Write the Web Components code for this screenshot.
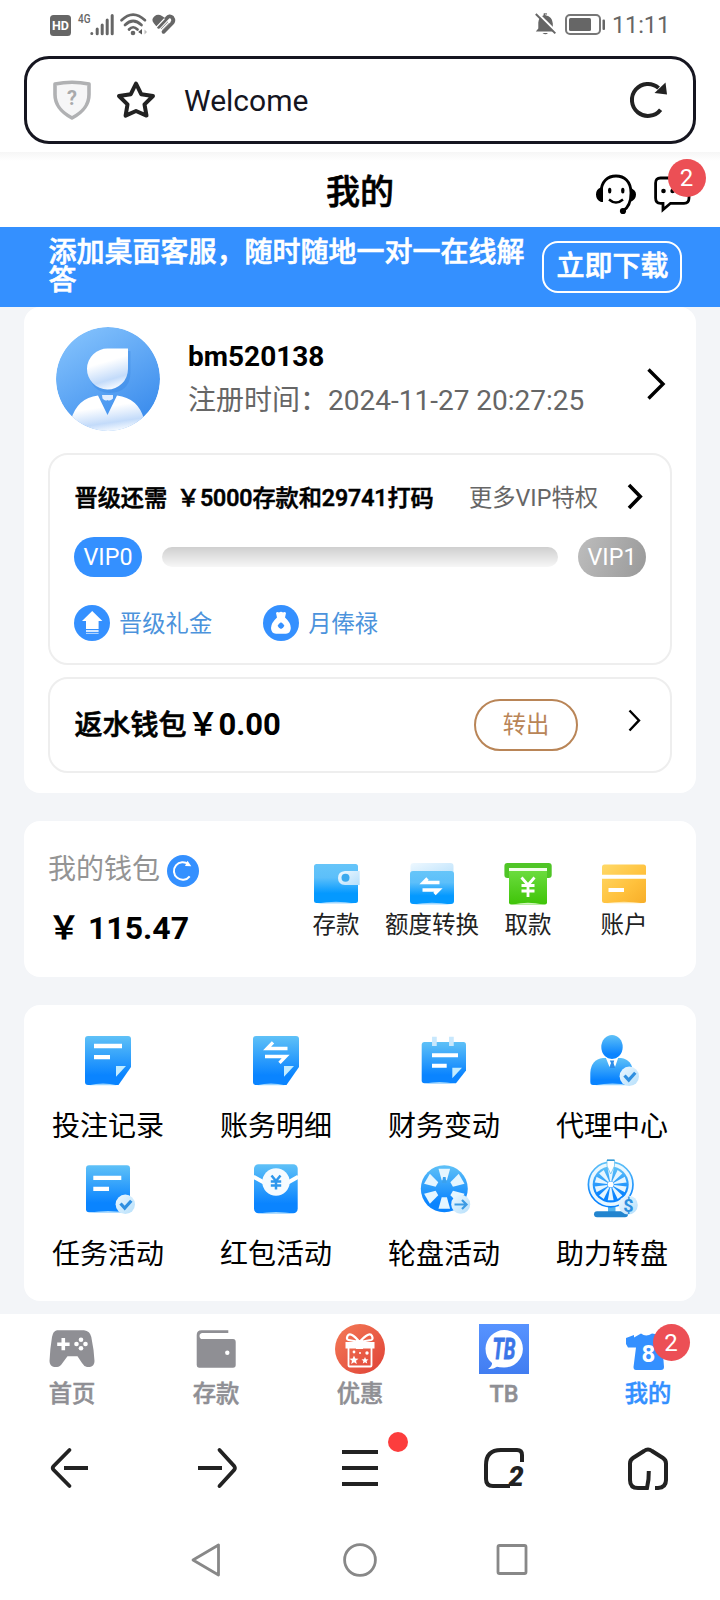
<!DOCTYPE html>
<html lang="zh-CN">
<head>
<meta charset="utf-8">
<title>我的</title>
<style>
html,body{margin:0;padding:0}
body{width:720px;height:1600px;overflow:hidden;background:#fff;color:#000;font-family:Roboto,"Noto Sans CJK SC",sans-serif;font-size:28px;line-height:1.2}
</style>
</head>
<body>
<mobile-screen></mobile-screen>
<script>
const GRAD = `<defs>
<linearGradient id="b" x1="0" y1="0" x2="0" y2="1"><stop offset="0" stop-color="#5fc1f7"/><stop offset=".8" stop-color="#0a84ff"/><stop offset="1" stop-color="#0a84ff"/></linearGradient>
<linearGradient id="w" x1="0" y1="0" x2="0" y2="1"><stop offset="0" stop-color="#66c5f9"/><stop offset=".35" stop-color="#5cbffa"/><stop offset=".75" stop-color="#0499ff"/><stop offset="1" stop-color="#0499ff"/></linearGradient>
<linearGradient id="l" x1="0" y1="0" x2="1" y2="1"><stop offset="0" stop-color="#eef8ff"/><stop offset="1" stop-color="#b5dffb"/></linearGradient>
</defs>`;
const wedges = (n, cx, cy, r1, r2, h1, h2, fill) => Array.from({length: n}, (_, i) =>
  `<path fill="${fill}" transform="rotate(${i * 360 / n} ${cx} ${cy})" d="M${cx - h1} ${cy - r1}L${cx - h2} ${cy - r2}H${cx + h2}L${cx + h1} ${cy - r1}z"/>`).join('');
const SHEEN = (x1, x2, y) => `<path d="M${x1} ${y}q${(x2 - x1) / 2} -3.4 ${x2 - x1} 0z" fill="#9bd5ff"/>`;
const CHECK = `<circle cx="49.3" cy="48.3" r="9.7" fill="url(#l)"/><path d="M44.5 47.5l4.2 4.6 6.6-7.4" fill="none" stroke="#2f8fe0" stroke-width="3.2"/>`;

const ICONS = {
hd:[21,21,`<rect width="21" height="21" rx="3.5" fill="#666"/><text x="10.5" y="15.4" text-anchor="middle" font-size="13" font-weight="700" fill="#fff" textLength="17" lengthAdjust="spacingAndGlyphs">HD</text>`],
signal:[36,23,`<text x="0" y="9.8" font-size="12.5" font-weight="500" fill="#666" textLength="12.5" lengthAdjust="spacingAndGlyphs">4G</text><g stroke="#666" stroke-width="3" stroke-linecap="round"><path d="M13.8 20.5v0M19.2 16v4.8M24.2 12v8.8M29.2 7v13.8M34.2 2.5v18.3"/></g>`],
wifi:[27,23,`<g fill="none" stroke="#666" stroke-width="2.7" stroke-linecap="round"><path d="M1.5 7.2Q13 -4 25 7.2M5 12Q13 4 21.5 12M9 16.5Q13 12 17.5 16.5"/></g><circle cx="13" cy="20" r="2.3" fill="#666"/><path d="M22 16v5.5l-3.800-2.500z" fill="#555"/><path d="M24.500 16.500l2.500 2.500-2.500 2.500z" fill="#bbb"/>`],
heart:[23,20,`<path d="M4.500 12.500L2 9.500Q-1.500 5.500 2.500 2.200Q6-.5 10 2L13 4z" fill="#666"/><path d="M6.800 12.800L14.800 4.300Q17.500 1 20.300 3.500Q22.500 6.500 19.800 9.500L11.500 17.800" fill="none" stroke="#666" stroke-width="3.800" stroke-linecap="round" stroke-linejoin="round"/><path d="M9.500 15.500L16.500 8.200" stroke="#666" stroke-width="2"/><path d="M8.300 17L17 8M4 13.600L12.500 4.600" stroke="#fff" stroke-width="1.300"/>`],
bell:[21,22,`<path d="M10.5 0v2.2Q17.5 3.5 17.8 10.5V15.5L20 18.5H.8L3.3 15.5V9.5Q3.7 4 8.6 2.2V.6Q10.4-.6 12 .6V2.3" fill="#666"/><path d="M7.5 20h5.5q-2.5 2.6-5.5 0z" fill="#666"/><path d="M2.4 0L21 18.6" stroke="#fff" stroke-width="2.4"/><path d="M.8 1L20.3 20.4" stroke="#666" stroke-width="2"/>`],
battery:[41,21,`<rect x="1" y="1" width="34" height="19" rx="4" fill="none" stroke="#777" stroke-width="2"/><rect x="4" y="4" width="22" height="13" rx="1.5" fill="#666"/><rect x="37.5" y="5.5" width="2.5" height="10.5" rx="1" fill="#666"/>`],
shield:[38,40,`<path d="M2 4Q19 .5 36 4V14.500C36 26 29 32.5 19 38C9 32.5 2 26 2 14.500z" fill="#f6f6f7" stroke="#b0b1b3" stroke-width="3.6" stroke-linejoin="round"/><text x="19" y="25" text-anchor="middle" font-size="20" font-weight="700" fill="#a9aaac">?</text>`],
star:[40,40,`<path d="M20 3.5L25.2 14.2L37 16L28.5 24.4L30.5 35.6L20 31L9.6 35.6L11.5 24.4L3 16L14.8 14.2z" fill="none" stroke="#222" stroke-width="4" stroke-linejoin="round"/>`],
reload:[38,38,`<path d="M30.6 28.7A16 16 0 1 1 28.6 7" fill="none" stroke="#222" stroke-width="4"/><path d="M35.5 1.5L37 13.5L24.5 12z" fill="#222"/>`],
headset:[40,40,`<path d="M5 19C5 7 12 2 20 2S35 7 35 19Q35 32 27 37" fill="none" stroke="#000" stroke-width="2.8"/><path d="M7 13.5V28H5Q0 26 0 20.5Q0 15 5 13.5zM34 14Q40 15.5 40 20.5Q40 26 34 28z" fill="#000"/><circle cx="27" cy="37" r="3.1"/><ellipse cx="13.7" cy="16.7" rx="1.7" ry="2.9"/><ellipse cx="26.8" cy="16.7" rx="1.7" ry="2.9"/><path d="M13 25.5Q20 31.5 27 25.5" fill="none" stroke="#000" stroke-width="2.4"/>`],
message:[37,37,`<path d="M6.5 2H30Q35 2 35 7V22Q35 27.3 30 27.3H16.5L9 33.8V27.3H6.5Q1.6 27.3 1.6 22V7Q1.6 2 6.5 2z" fill="none" stroke="#000" stroke-width="2.8"/><circle cx="9.5" cy="15" r="2.3"/><circle cx="18.6" cy="15" r="2.3"/><circle cx="27.6" cy="15" r="2.3"/>`],
avatar:[104,104,`<defs><linearGradient id="a" x1=".15" y1="0" x2=".75" y2="1"><stop offset="0" stop-color="#85c3fd"/><stop offset="1" stop-color="#388aec"/></linearGradient><linearGradient id="p" x1=".25" y1="0" x2=".55" y2="1"><stop offset=".35" stop-color="#fff"/><stop offset=".78" stop-color="#c3dbfa"/><stop offset="1" stop-color="#f4f9ff"/></linearGradient><clipPath id="c"><circle cx="52" cy="52" r="52"/></clipPath></defs><g clip-path="url(#c)"><circle cx="52" cy="52" r="52" fill="url(#a)"/><path d="M53 22H73V44Q72 63.5 52 64Q33 63 31.5 43.5Q33 23 53 22z" fill="#2f7fdd" opacity=".3" transform="translate(1.5 2)"/><path d="M52 21.500H72V42A20.500 20.500 0 1 1 52 21.500z" fill="url(#p)"/><path d="M15 93Q21 71 42 68.500L51.500 88L61 68.500Q82 71 88 92L80 104H25z" fill="url(#p)"/><path d="M46 68H57V71.500Q54 74.500 51.500 73Q49 74.500 46.500 71.500z" fill="#e0edff"/></g>`],
chev:[20,34,`<path d="M2.5 2.5L17 17L2.5 31.5" fill="none" stroke="#000" stroke-width="3.4"/>`],
chevb:[17,27,`<path d="M2 2L13.2 13.4L2 25" fill="none" stroke="#000" stroke-width="3.6"/>`],
chevs:[14,23,`<path d="M1.5 1.5L11 11.4L1.5 21.5" fill="none" stroke="#000" stroke-width="2.4"/>`],
promote:[36,36,`<circle cx="18" cy="18" r="18" fill="#3490ff"/><path d="M18.2 6L28.4 16H24.6V24H12V16H8z" fill="#fff"/><path d="M12 26H24.6" stroke="#fff" stroke-width="1.6"/><path d="M12 28.4H24.6" stroke="#bcdcff" stroke-width="1"/>`],
bag:[36,36,`<circle cx="18" cy="18" r="18" fill="#3490ff"/><path d="M13 8Q14 6.5 16 7.5Q18 6 20 7.5Q22 6.5 23 8L22 12.500H14zM14 12.500H22Q28 18 27.8 23Q27.5 28.7 23 28.7H13Q8.2 28.7 8 23Q8 18 14 12.500z" fill="#fff"/><path d="M18 17.300l2 1.400 1.400 2-1.400 2-2 1.400-2-1.400-1.400-2 1.400-2z" fill="#3490ff"/>`],
refresh:[32,32,`<circle cx="16" cy="16" r="16" fill="#3490ff"/><path d="M22.7 21.3A8.8 8.8 0 1 1 21.5 9.3" fill="none" stroke="#fff" stroke-width="2"/><path d="M20.5 5.7L24.3 11.3L18 11z" fill="#fff"/>`],
deposit:[48,48,`${GRAD}<rect x="2" y="5" width="44" height="39" rx="2.5" fill="url(#w)"/>${SHEEN(5,43,44.4)}<path d="M33 12H47.7V26H33Q26 25.5 26 19Q26 12.500 33 12z" fill="url(#l)"/><circle cx="33.5" cy="18.8" r="4" fill="#3ba9ee"/>`],
transfer:[48,48,`${GRAD}<rect x="2.500" y="4" width="43" height="16" rx="3" fill="url(#l)"/><rect x="2" y="12" width="44" height="33" rx="3" fill="url(#w)"/>${SHEEN(5,43,45.4)}<path d="M31.500 23.500H15.500L19.500 19.500M14.500 31H30.500L26.500 35" fill="none" stroke="#fff" stroke-width="3.400"/>`],
withdraw:[48,48,`<defs><linearGradient id="g" x1="0" y1="0" x2="0" y2="1"><stop offset="0" stop-color="#6bdc3e"/><stop offset="1" stop-color="#3fc408"/></linearGradient></defs><rect x=".4" y="4" width="47.300" height="15" rx="3" fill="#4fc526"/><rect x="5" y="9" width="38" height="3" fill="#f0ffe9"/><path d="M5 12H43V43.500Q43 45.500 41 45.500H7Q5 45.500 5 43.500z" fill="url(#g)"/><path d="M9 45.500Q24 42 39 45.500z" fill="#d0f5bd"/><path d="M17.500 18.500L24 26L30.500 18.500M24 25V38M17.500 26.500H30.500M17.500 32H30.500" fill="none" stroke="#fff" stroke-width="2.8"/>`],
account:[48,48,`<defs><linearGradient id="y" x1="0" y1="0" x2="1" y2="1"><stop offset="0" stop-color="#ffd968"/><stop offset=".6" stop-color="#ffc13c"/><stop offset="1" stop-color="#f7ae29"/></linearGradient></defs><rect x="2" y="5.500" width="44" height="38.500" rx="2.500" fill="url(#y)"/><path d="M2 17.800H46M8.500 31H24" stroke="#fff" stroke-width="4"/><path d="M5 44.300Q24 41.300 43 44.300z" fill="#ffe7ac"/>`],
bets:[64,64,`${GRAD}<path d="M12 8H52Q55 8 55 11V39L42.500 57H12Q9 57 9 54V11Q9 8 12 8z" fill="url(#b)"/>${SHEEN(13,41,57.300)}<path d="M18 18H46M18 29.200H34" stroke="#fff" stroke-width="4.300"/><path d="M40 38H50L40 48.700z" fill="#c3ecff"/>`],
ledger:[64,64,`${GRAD}<path d="M12 8H52Q55 8 55 11V39L42.500 57H12Q9 57 9 54V11Q9 8 12 8z" fill="url(#b)"/>${SHEEN(13,41,57.300)}<path d="M43.500 20.500H23L29 14.300M21 28.500H41.700L35.500 34.800" fill="none" stroke="#fff" stroke-width="3.300"/><path d="M40 38H50L40 48.700z" fill="#c3ecff"/>`],
finance:[64,64,`${GRAD}<path d="M12.500 14H51.500Q54 14 54 17V42.500L44 55.300H12.500Q9.700 55.300 9.700 52.500V17Q9.700 14 12.500 14z" fill="url(#b)"/>${SHEEN(13,42,55.600)}<path d="M22.400 8.700V18M39.400 8.700V18" stroke="#c8e8fd" stroke-width="4.700"/><path d="M20 27.300H46M20 37.800H34.700" stroke="#fff" stroke-width="4"/><path d="M40.300 39.700H50L40.300 50.300z" fill="#c3ecff"/>`],
agent:[64,64,`${GRAD}<path d="M23 30H41Q52 31.500 53 44V57H13Q10.300 57 10.300 54V45Q11 31.500 23 30z" fill="url(#b)"/>${SHEEN(15,50,57.300)}<ellipse cx="32" cy="19" rx="10.700" ry="12" fill="url(#b)"/><path d="M25.500 29L29.500 39L32 33L35 39L38.500 29Q32 33 25.500 29z" fill="#fff"/><path d="M29.800 32.500H34.200L33.500 35L35 40H29.800L31 35z" fill="#2f8de8"/>${CHECK}`],
task:[64,64,`${GRAD}<rect x="10" y="9.300" width="44" height="47" rx="3" fill="url(#b)"/>${SHEEN(14,50,56.600)}<path d="M17.300 21.900H45.300M17.300 32.900H33" stroke="#fff" stroke-width="4.300"/>${CHECK}`],
packet:[64,64,`${GRAD}<rect x="10" y="8.300" width="43.700" height="49" rx="4.500" fill="url(#b)"/>${SHEEN(14,50,57.600)}<path d="M9.500 20.800L20 26.500M54.200 20.800L44 26.500" stroke="#fff" stroke-width="4"/><circle cx="32" cy="26" r="13.700" fill="#f5fbff"/><path d="M27.500 19.500L32 25L36.500 19.500M32 24.500V33.500M26.800 25.500H37.200M26.800 29.600H37.200" fill="none" stroke="#2e97ec" stroke-width="2.500"/>`],
wheel:[64,64,`${GRAD}<circle cx="32.300" cy="32.800" r="23.500" fill="url(#b)"/>${wedges(6,32.3,32.8,8.5,20,2.6,5.8,'#e6f6ff')}<path d="M31 21H33.600L34.500 27H30z" fill="#3ba1ee"/><circle cx="48.700" cy="48.300" r="9.500" fill="url(#l)"/><path d="M42.500 48.500H54M50 44L54.500 48.500L50 53" fill="none" stroke="#3c9be4" stroke-width="2.200"/>`],
spin:[64,64,`${GRAD}<path d="M28 50H35.500V57H28z" fill="#53b3ed"/><rect x="14" y="55.300" width="34" height="6" rx="3" fill="#2385cf"/><circle cx="30.700" cy="28.500" r="22.300" fill="#eaf8ff" stroke="url(#b)" stroke-width="1.700"/><circle cx="30.700" cy="28.500" r="18" fill="url(#b)"/>${wedges(10,30.7,28.5,3.5,15.8,.7,2.9,'#e6f6ff')}<circle cx="30.700" cy="28.500" r="3" fill="#fff"/><path d="M27 4H34.500V10L30.700 18L27 10z" fill="#fff" stroke="#70c4f0" stroke-width=".8"/><path d="M27 4.200h7.500" stroke="#1484c9" stroke-width="1.200"/><circle cx="48.300" cy="49" r="9.500" fill="url(#l)"/><text x="48.300" y="55.500" text-anchor="middle" font-size="18" font-weight="700" fill="#2b8fdf">$</text>`],
game:[50,50,`<path d="M10 6.200H37Q43 6.800 44.300 13Q47 26 47.500 37Q47.500 42 43 43H40Q37 42.500 35 39L30.500 32.200H20.500L15.500 39Q13 43 10 43H7Q2.600 42 2.500 37Q3 25 5 13Q6 7 10 6.200z" fill="#8f8f94"/><path d="M16.300 14V26.300M10.200 20.200H22.600" stroke="#fff" stroke-width="3.600"/><circle cx="34" cy="15.700" r="2.300" fill="#fff"/><circle cx="34" cy="24.300" r="2.300" fill="#fff"/><circle cx="29.500" cy="20" r="2.300" fill="#fff"/><circle cx="38.500" cy="20" r="2.300" fill="#fff"/>`],
purse:[50,50,`<path d="M5.700 11Q5.700 6.200 10.500 6.200H37.300V9H11.500Q8.500 9.500 8.500 11.900Q8.500 14.900 11.500 15.100H42Q44.700 15.300 44.700 18V41Q44.700 43.700 42 43.700H8Q5.700 43.500 5.700 41z" fill="#8f8f94"/><circle cx="36.300" cy="28.700" r="2.200" fill="#fff"/>`],
gift:[50,50,`<defs><linearGradient id="r" x1="0" y1="0" x2="1" y2="1"><stop offset="0" stop-color="#f47b57"/><stop offset="1" stop-color="#df4136"/></linearGradient></defs><circle cx="25" cy="25" r="25" fill="url(#r)"/><g fill="none" stroke="#fff" stroke-linejoin="round"><path d="M13.500 24V41.500Q13.500 42.500 14.500 42.500H35.500Q36.500 42.500 36.500 41.500V24" stroke-width="1.800"/><path d="M24.500 18L13.500 16Q11 15.500 12.500 12Q15.500 7 24.500 18Q34.500 7 37 12Q38.500 15.500 36 16z" stroke-width="2.200"/></g><path d="M10.500 18H21V24.500H10.500zM28 18H39.500V24.500H28zM21 16H28V25H21z" fill="#fff"/><path d="M19 31.500l1.300 3 3.200.2-2.500 2.100.8 3.100-2.800-1.700-2.800 1.700.8-3.100-2.500-2.100 3.200-.2zM30 33l1 2.300 2.500.2-1.900 1.600.6 2.400-2.200-1.300-2.200 1.300.6-2.400-1.900-1.600 2.500-.2z" fill="#fff"/><circle cx="19" cy="28" r="1.400" fill="#fff"/><circle cx="32" cy="29" r="1.700" fill="#fff"/><circle cx="25" cy="29" r="1" fill="#fff"/>`],
tb:[50,50,`<defs><linearGradient id="t" x1="0" y1="0" x2="0" y2="1"><stop offset="0" stop-color="#5793ff"/><stop offset="1" stop-color="#417df1"/></linearGradient></defs><rect width="50" height="50" fill="url(#t)"/><path d="M9 45Q13.500 42 13 39Q6.500 34 6.500 24.500A18.700 18.700 0 1 1 25 43.500Q20 43.500 18 42.700Q14 45.500 9 45z" fill="#fff"/><text x="13.500" y="34.800" font-family="Roboto" font-size="28.500" font-weight="700" font-style="italic" fill="#3b76e8" stroke="#3b76e8" stroke-width=".8" textLength="23" lengthAdjust="spacingAndGlyphs">TB</text>`],
shirt:[50,50,`<path d="M3 14L11 11V13.500L18 9.500Q23 13.500 29 9.500L38 11L47 16L44 25L39.500 23.500L41 43Q41 46 38 46H13Q10.500 46 10.500 43L13 23.500H5L3 20z" fill="#3490ff"/><text x="25.500" y="38" text-anchor="middle" font-size="24" font-weight="700" fill="#fff">8</text>`],
back:[44,44,`<path d="M19.500 4L3.500 20.200Q2 22 3.500 23.800L19.500 40" fill="none" stroke="#222" stroke-width="3.800" stroke-linecap="round"/><path d="M14 22H38" stroke="#222" stroke-width="4"/>`],
fwd:[44,44,`<path d="M25.500 4L40.300 20.200Q41.500 22 40.300 23.800L25.500 40" fill="none" stroke="#222" stroke-width="3.800" stroke-linecap="round"/><path d="M4 22H28" stroke="#222" stroke-width="4"/>`],
menu:[44,44,`<path d="M4 6H40M4 22H40M4 38H40" stroke="#222" stroke-width="4"/>`],
tabs:[44,44,`<path d="M40 16V9Q40 4 35 4H19Q4 4 4 19V33Q4 40 11 40H28" fill="none" stroke="#222" stroke-width="4"/><text x="34" y="40" text-anchor="middle" font-size="27" font-weight="900" font-style="italic" fill="#222">2</text>`],
home:[44,44,`<path d="M22.800 25Q23 34 21 42H12Q4 42 4 34V17.500Q4 14 7 12L18 5Q22 2 26 5L37 12Q40 14 40 17.500V34Q40 41.500 32 42H29" fill="none" stroke="#222" stroke-width="4"/>`],
tri:[34,36,`<path d="M3 18L28.500 3V33z" fill="none" stroke="#888" stroke-width="2.800" stroke-linejoin="round"/>`],
circ:[34,36,`<circle cx="17" cy="18" r="15.400" fill="none" stroke="#888" stroke-width="2.800"/>`],
sq:[34,36,`<rect x="2" y="3.500" width="28" height="28" rx="1.500" fill="none" stroke="#888" stroke-width="2.800"/>`]
};

function define(tag, html, setup) {
  const tpl = document.createElement('template');
  tpl.innerHTML = html;
  customElements.define(tag, class extends HTMLElement {
    constructor() {
      super();
      this.attachShadow({mode: 'open'}).appendChild(tpl.content.cloneNode(true));
    }
    connectedCallback() { if (setup) setup(this, this.shadowRoot); }
  });
}

define('app-icon', `<style>:host{display:block;flex:none;-webkit-text-stroke:0}svg{display:block;overflow:visible}</style><div></div>`, (el, root) => {
  const [w, h, body] = ICONS[el.getAttribute('name')];
  root.querySelector('div').innerHTML = `<svg width="${w}" height="${h}" viewBox="0 0 ${w} ${h}">${body}</svg>`;
});

define('count-badge', `<style>:host{display:flex;align-items:center;justify-content:center;width:37px;height:37px;border-radius:50%;background:#ec4f55;color:#fff;font-size:24px;line-height:1;-webkit-text-stroke:0}</style><slot></slot>`);

define('status-bar', `<style>
:host{display:flex;height:56px;box-sizing:border-box;padding:13px 52px 0 50px;align-items:flex-start;color:#666}
.sp{flex:1}
.hd{margin:2px 7px 0 0}.wifi{margin:0 5px 0 6px}.heart{margin-top:1px}
.bell{margin-right:9px}.bat{margin-top:1px}
time{font-size:23.500px;line-height:24px;margin:0 0 0 6px;width:56px;white-space:nowrap;letter-spacing:-.100px}
</style><app-icon class="hd" name="hd"></app-icon><app-icon name="signal"></app-icon><app-icon class="wifi" name="wifi"></app-icon><app-icon class="heart" name="heart"></app-icon><span class="sp"></span><app-icon class="bell" name="bell"></app-icon><app-icon class="bat" name="battery"></app-icon><time>11:11</time>`);

define('address-bar', `<style>
:host{display:flex;align-items:center;height:88px;margin:0 24px;box-sizing:border-box;border:3px solid #161620;border-radius:25px;padding:0 25px 0 26px}
.star{margin:0 28px 0 25px}
span{flex:1;font-size:30px;color:#15151f;padding-top:2px}
</style><app-icon name="shield"></app-icon><app-icon class="star" name="star"></app-icon><span><slot></slot></span><app-icon name="reload"></app-icon>`);

define('page-header', `<style>
:host{display:grid;grid-template-columns:1fr auto 1fr;align-items:center;height:75px;margin-top:8px;background:linear-gradient(#f6f6f6,#fff 9px)}
h1{grid-column:2;margin:4px 0 0;font-size:34px;line-height:40px;font-weight:500;-webkit-text-stroke:.6px}
.r{display:flex;justify-content:flex-end;gap:18px;padding:8px 29px 0 0}
.m{position:relative;margin-top:2px}
count-badge{position:absolute;left:13.500px;top:-16.500px;width:38px;height:38px}
</style><h1><slot></slot></h1><div class="r"><app-icon name="headset"></app-icon><div class="m"><app-icon name="message"></app-icon><count-badge>2</count-badge></div></div>`);

define('download-banner', `<style>
:host{display:flex;align-items:center;height:80px;box-sizing:border-box;background:#3490ff;color:#fff;font-weight:500;padding:0 38px 0 48.500px;-webkit-text-stroke:.6px}
p{margin:-1px 0 0;width:480px;font-size:28px;line-height:28px}
button{font:inherit;color:inherit;-webkit-text-stroke:.6px;background:none;border:2px solid #fff;border-radius:16px;width:140px;height:52px;margin:0 0 0 auto;padding:0 0 1px 1px;line-height:40px;font-size:28px}
</style><p><slot></slot></p><button>立即下载</button>`);

define('surface-card', `<style>:host{display:block;background:#fff;border-radius:16px;margin:0 24px;box-sizing:border-box}</style><slot></slot>`);

define('user-profile', `<style>
:host{display:flex;padding:20px 30px 0 32px;height:146px;box-sizing:border-box}
.t{flex:1;margin:13px 0 0 28px}
.n{font-weight:700;font-size:28px;line-height:34px;white-space:nowrap}
.d{color:#666;font-size:28px;line-height:40px;margin-top:7px;white-space:nowrap}
.c{margin-top:40px}
</style><app-icon name="avatar"></app-icon><div class="t"><div class="n">bm520138</div><div class="d">注册时间：2024-11-27 20:27:25</div></div><app-icon class="c" name="chev"></app-icon>`);

define('vip-panel', `<style>
:host{display:block;height:212px;box-sizing:border-box;margin:0 24px;border:2px solid #eee;border-radius:20px;padding:24px 24px 0;font-size:23.300px}
.top{display:flex;align-items:center;height:36px;white-space:nowrap}
b{font-weight:500;-webkit-text-stroke:.6px;font-size:23.200px;letter-spacing:-.050px;word-spacing:4px;margin-left:.500px}.more{color:#666;margin-left:auto}b,.more{padding-top:3px}.top app-icon{margin:-2px 2px 0 29px}
.bar{display:flex;align-items:center;gap:20px;margin-top:22px}
.pill{width:68px;height:40px;border-radius:20px;background:#3490ff;color:#fff;display:flex;align-items:center;justify-content:center;padding-top:1px;box-sizing:border-box}
.g{background:linear-gradient(110deg,#bdbdbd,#999)}
.track{flex:1;height:20px;border-radius:10px;background:linear-gradient(#cfcfcf,#f7f7f7)}
.perks{display:flex;align-items:center;margin-top:28px;color:#4c93dc}
.perks span{margin-left:9px;padding-top:3px}.second{margin-left:51px}
</style><div class="top"><b>晋级还需 ￥5000存款和29741打码</b><span class="more">更多VIP特权</span><app-icon name="chevb"></app-icon></div>
<div class="bar"><div class="pill">VIP0</div><div class="track"></div><div class="pill g">VIP1</div></div>
<div class="perks"><app-icon name="promote"></app-icon><span>晋级礼金</span><app-icon class="second" name="bag"></app-icon><span>月俸禄</span></div>`);

define('rebate-panel', `<style>
:host{display:flex;height:96px;box-sizing:border-box;margin:12px 24px 0;border:2px solid #eee;border-radius:20px;padding:0 28px 0 24.500px;align-items:center;font-weight:500}
.l{font-size:28px;display:flex;align-items:baseline;flex:1;margin-top:-1px;-webkit-text-stroke:.6px}
.l span{font-size:31px;font-weight:700;margin-left:1px;-webkit-text-stroke:0}
button{font:inherit;font-weight:400;font-size:23.300px;line-height:30px;color:#b98557;background:none;border:2px solid #b98557;border-radius:26px;width:104px;height:52px;padding:0;box-sizing:border-box}
app-icon{margin:-10px 0 0 50px}
</style><div class="l">返水钱包<span>￥0.00</span></div><button>转出</button><app-icon name="chevs"></app-icon>`);

define('icon-tile', `<style>:host{display:flex;flex-direction:column;align-items:center;white-space:nowrap}.t{line-height:36px;margin-top:var(--tile-gap,16px)}</style><span class="t"><slot></slot></span>`, (el, root) => {
  const icon = document.createElement('app-icon');
  icon.setAttribute('name', el.getAttribute('icon'));
  root.querySelector('.t').before(icon);
});

define('wallet-summary', `<style>
:host{display:flex;justify-content:space-between;height:156px;box-sizing:border-box;padding:0 24px}
.l{padding-top:29px}
.h{display:flex;align-items:center;color:#949494;height:40px;font-size:28px}
.h app-icon{margin:2px 0 0 7px}
.v{font-size:32px;font-weight:700;line-height:40px;margin-top:18px}
.r{display:grid;grid-template-columns:repeat(4,96px);padding-top:38px;--tile-gap:0px;font-size:23.500px;color:#222;justify-items:center}
</style><div class="l"><div class="h">我的钱包<app-icon name="refresh"></app-icon></div><div class="v">￥ 115.47</div></div>
<div class="r"><icon-tile icon="deposit">存款</icon-tile><icon-tile icon="transfer">额度转换</icon-tile><icon-tile icon="withdraw">取款</icon-tile><icon-tile icon="account">账户</icon-tile></div>`);

define('service-grid', `<style>:host{display:grid;grid-template-columns:repeat(4,168px);grid-auto-rows:128px;height:296px;box-sizing:border-box;padding-top:23px;font-size:28px;--tile-gap:17px}</style>
<icon-tile icon="bets">投注记录</icon-tile><icon-tile icon="ledger">账务明细</icon-tile><icon-tile icon="finance">财务变动</icon-tile><icon-tile icon="agent">代理中心</icon-tile>
<icon-tile icon="task">任务活动</icon-tile><icon-tile icon="packet">红包活动</icon-tile><icon-tile icon="wheel">轮盘活动</icon-tile><icon-tile icon="spin">助力转盘</icon-tile>`);

define('tab-bar', `<style>
:host{display:grid;grid-template-columns:repeat(5,144px);height:98px;box-sizing:border-box;padding-top:10px;background:#fff;color:#8f8f94;font-weight:500;font-size:23.300px;--tile-gap:2px;-webkit-text-stroke:.5px}
.me{position:relative;color:#3490ff}
count-badge{position:absolute;left:76.500px;top:0;font-weight:400;-webkit-text-stroke:0}
</style><icon-tile icon="game">首页</icon-tile><icon-tile icon="purse">存款</icon-tile><icon-tile icon="gift">优惠</icon-tile><icon-tile icon="tb">TB</icon-tile><div class="me"><icon-tile icon="shirt">我的</icon-tile><count-badge>2</count-badge></div>`);

define('browser-nav', `<style>
:host{display:grid;grid-template-columns:repeat(5,144px);height:112px;align-items:center;justify-items:center}
.m{position:relative}i{position:absolute;left:50px;top:-14px;width:20px;height:20px;border-radius:50%;background:#fc3d3d}
</style><app-icon name="back"></app-icon><app-icon name="fwd"></app-icon><div class="m"><app-icon name="menu"></app-icon><i></i></div><app-icon name="tabs"></app-icon><app-icon name="home"></app-icon>`);

define('system-nav', `<style>:host{display:flex;justify-content:center;gap:119px;padding-top:18px}</style><app-icon name="tri"></app-icon><app-icon name="circ"></app-icon><app-icon name="sq"></app-icon>`);

define('mobile-screen', `<style>
:host{display:flex;flex-direction:column;width:720px;height:1600px;background:#fff}
main{background:#f3f5f8;height:1007px;display:flex;flex-direction:column;gap:28px}
.first{height:486px}
</style><status-bar></status-bar><address-bar>Welcome</address-bar><page-header>我的</page-header>
<download-banner>添加桌面客服，随时随地一对一在线解答</download-banner>
<main><surface-card class="first"><user-profile></user-profile><vip-panel></vip-panel><rebate-panel></rebate-panel></surface-card>
<surface-card><wallet-summary></wallet-summary></surface-card><surface-card><service-grid></service-grid></surface-card></main>
<tab-bar></tab-bar><browser-nav></browser-nav><system-nav></system-nav>`);
</script>
</body>
</html>
